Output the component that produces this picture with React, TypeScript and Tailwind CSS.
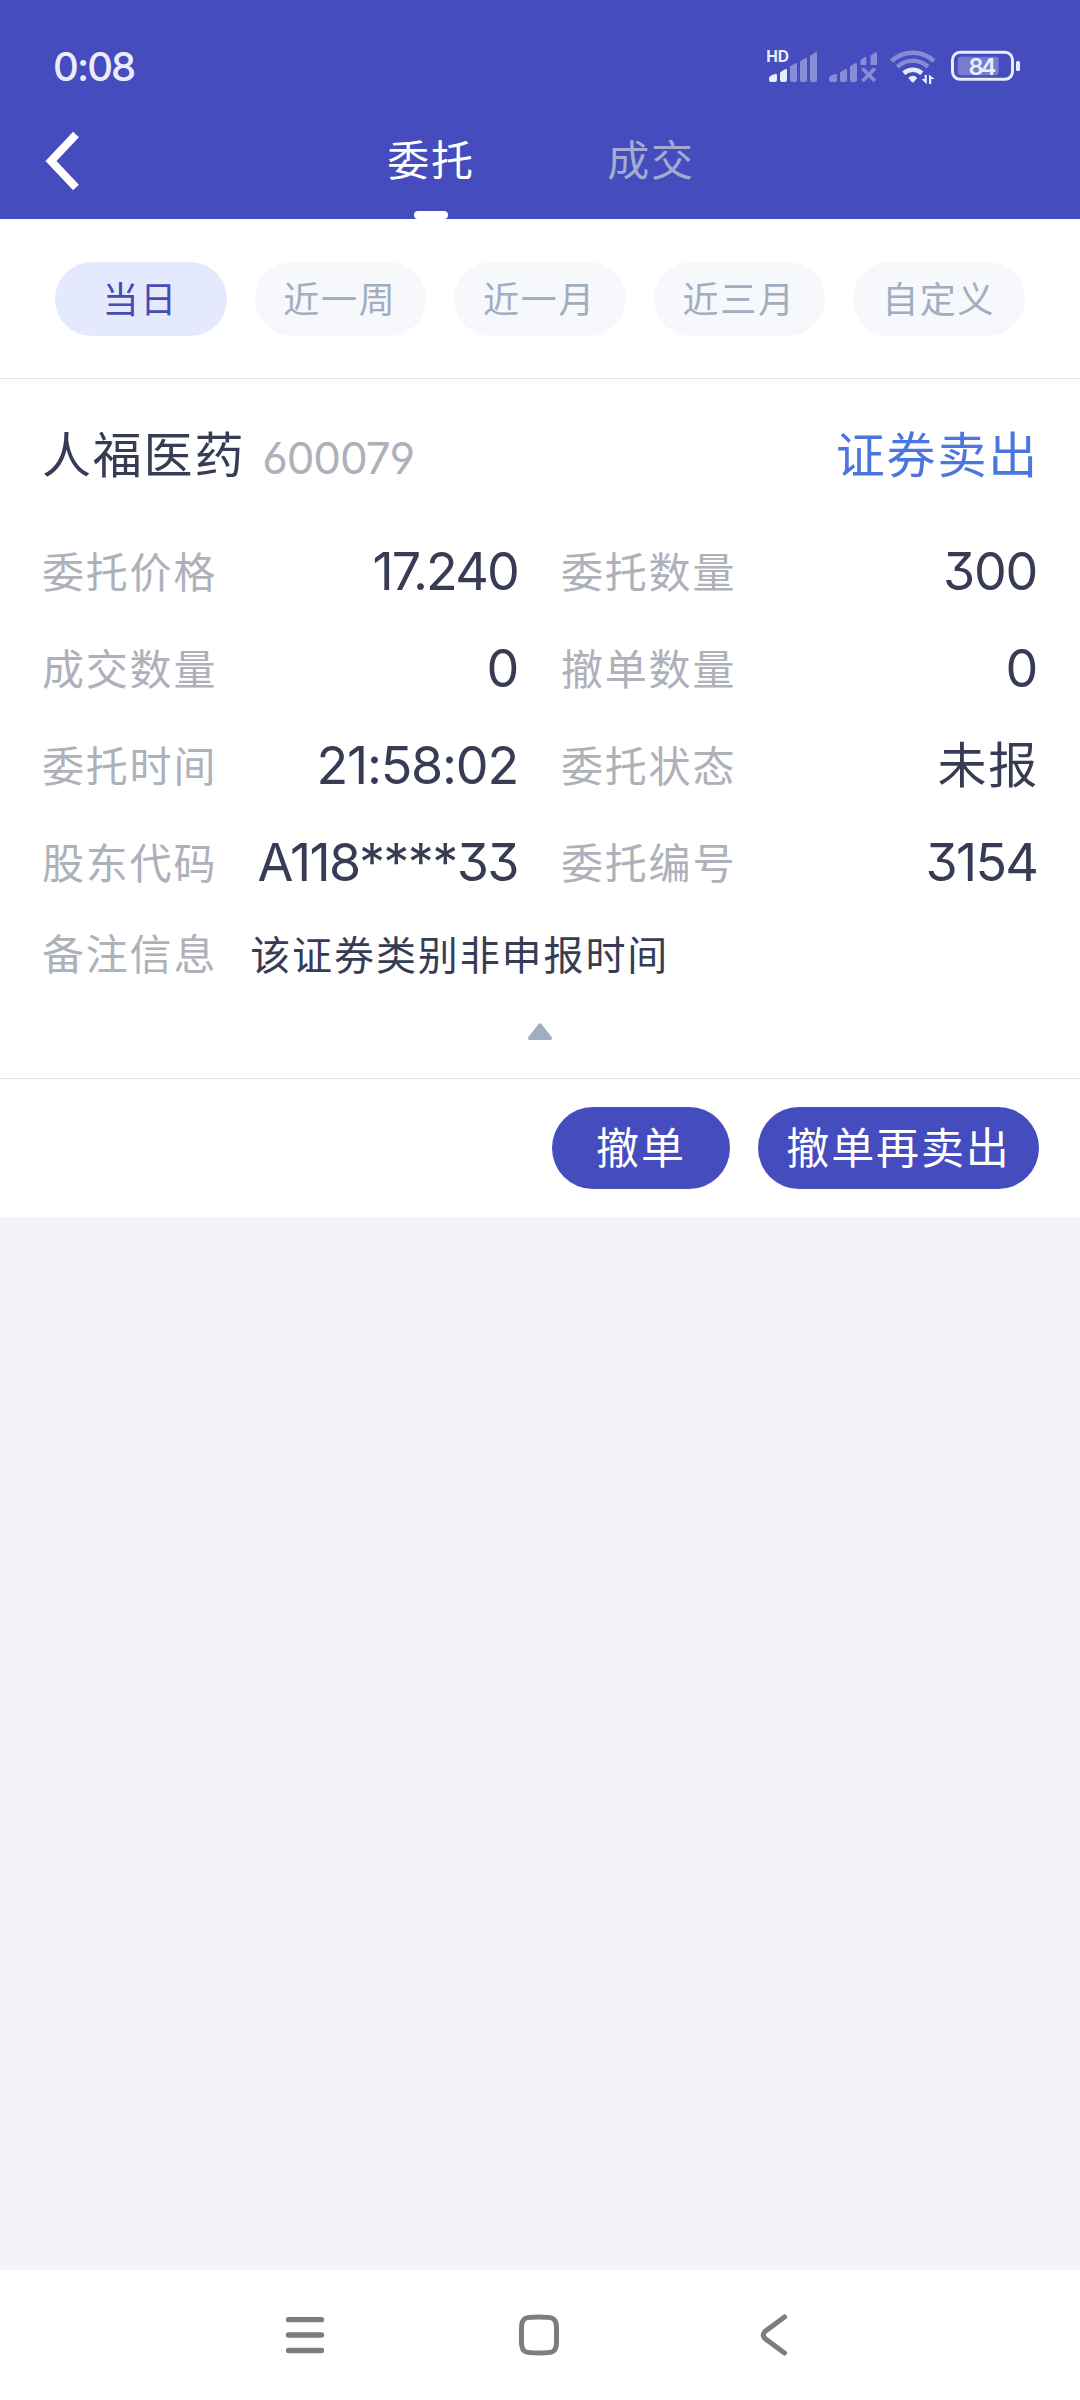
import clsx from 'clsx';
import { useState } from 'react';

const tabs = ['委托', '成交'];
const ranges = ['当日', '近一周', '近一月', '近三月', '自定义'];

const fields = [
  { label: '委托价格', value: '17.240', tracking: 'tracking-[-1.800px]' },
  { label: '委托数量', value: '300', tracking: 'tracking-[-1.300px]' },
  { label: '成交数量', value: '0', tracking: 'tracking-[-1.300px]' },
  { label: '撤单数量', value: '0', tracking: 'tracking-[-1.300px]' },
  { label: '委托时间', value: '21:58:02', tracking: 'tracking-[-1.200px]' },
  { label: '委托状态', value: '未报', cjk: true },
  { label: '股东代码', value: 'A118****33', tracking: 'tracking-[-1.600px]' },
  { label: '委托编号', value: '3154', tracking: 'tracking-[-1.800px]' },
];

const digits =
  "font-['Inter','Noto_Sans_CJK_SC',sans-serif] [font-feature-settings:'cv03','cv04','cv09']";

function StatusIcons() {
  return (
    <svg width="260" height="46" viewBox="0 0 260 46" fill="#ebecfb">
      {/* sim 1 */}
      <text x="6.2" y="22" fontSize="15.5" fontWeight="700" fontFamily="Inter, sans-serif">
        HD
      </text>
      <path d="M9 38.500Q9 36.500 11 35.500L15 34Q17 33.200 17 35.500V40Q17 42 15 42H11Q9 42 9 40Z" />
      <path d="M20 32.500L25 29.300Q27 28.200 27 30.500V40Q27 42 25 42H22Q20 42 20 40Z" />
      <g opacity="0.4">
        <path d="M30 26.500L35 23.300Q37 22.200 37 24.500V40Q37 42 35 42H32Q30 42 30 40Z" />
        <path d="M40 21.500L45 18.200Q47 17 47 19.500V40Q47 42 45 42H42Q40 42 40 40Z" />
        <path d="M50 15.800L55 12.500Q57 11.300 57 13.800V40Q57 42 55 42H52Q50 42 50 40Z" />
      </g>
      {/* sim 2 */}
      <g opacity="0.4">
        <path d="M69 38.500Q69 36.500 71 35.500L75 34Q77 33.200 77 35.500V40Q77 42 75 42H71Q69 42 69 40Z" />
        <path d="M80 32.500L85 29.300Q87 28.200 87 30.500V40Q87 42 85 42H82Q80 42 80 40Z" />
        <path d="M90 26.500L95 23.300Q97 22.200 97 24.500V40Q97 42 95 42H92Q90 42 90 40Z" />
        <path d="M100.500 20L104.500 17.300Q106.300 16.300 106.300 18V25H100.500Z" />
        <path d="M110.500 15.800L115 12.500Q117 11.300 117 13.800V25H110.500Z" />
        <path d="M102.500 28.500L115 41M115 28.500L102.500 41" stroke="#ebecfb" strokeWidth="3.800" />
      </g>
      {/* wifi */}
      <g fill="none" stroke="#ebecfb" strokeWidth="4.500">
        <path d="M131.500 21.200A31 31 0 0 1 174 21.200" opacity="0.4" />
        <path d="M137.500 26.800A22.500 22.500 0 0 1 168 26.800" opacity="0.4" />
        <path d="M143.800 33.200A13.500 13.500 0 0 1 161.800 33.200" />
      </g>
      <path d="M148.300 38Q152.800 33.500 157.300 38L153.800 42Q152.800 43 151.800 42Z" />
      <path d="M161.500 39H164.600V35H166.800V44.200ZM169 44V34.500L174.600 39H171.300V44Z" />
      {/* battery */}
      <rect x="192.500" y="12.300" width="60" height="27" rx="7.500" fill="none" stroke="#ebecfb" strokeWidth="3" />
      <rect x="197.700" y="16.800" width="41" height="18.500" rx="3" opacity="0.3" />
      <rect x="256" y="21" width="4" height="10" rx="1.500" />
      <text x="208.500" y="34.500" fontSize="23.500" fontWeight="600" fontFamily="Inter, sans-serif" textLength="28">
        84
      </text>
    </svg>
  );
}

function Header() {
  const [active, setActive] = useState(tabs[0]);

  return (
    <header className="h-[219px] bg-[#444cbe]">
      <div className="flex h-[103px] items-start justify-between pl-[53px] pr-[60px] pt-10">
        <span
          className={clsx('mt-1 text-[40px] leading-[46px] font-medium tracking-[-1.900px] text-[#ebecfb]', digits)}
        >
          0:08
        </span>
        <StatusIcons />
      </div>
      <div className="flex h-[116px] items-center">
        <button className="ml-[43px]" aria-label="返回">
          <svg width="38" height="60" viewBox="0 0 38 60" fill="none" stroke="#fff" strokeWidth="8">
            <path d="M33 3.500L8 30L33 56.500" />
          </svg>
        </button>
        <nav className="ml-[305px] flex h-full gap-[130px]">
          {tabs.map((tab) => (
            <button
              key={tab}
              onClick={() => setActive(tab)}
              className={clsx(
                'flex h-full w-[90px] flex-col items-center pt-[25px] text-[42px] leading-[60px] tracking-[1.800px]',
                tab === active ? 'text-white' : 'text-[#a3acd0]',
              )}
            >
              {tab}
              {tab === active && <span className="mt-auto h-2 w-[34px] rounded-[4px] bg-white" />}
            </button>
          ))}
        </nav>
      </div>
    </header>
  );
}

function RangeFilter() {
  const [active, setActive] = useState(ranges[0]);

  return (
    <div className="grid h-[160px] grid-cols-5 gap-7 border-b border-[#e3e3e5] bg-white px-[55px] pt-[43px]">
      {ranges.map((range) => (
        <button
          key={range}
          onClick={() => setActive(range)}
          className={clsx(
            'h-[74px] rounded-full pb-1 pr-px text-[36px] tracking-[1.700px]',
            range === active ? 'bg-[#e5e9fe] text-[#454cb4]' : 'bg-[#f6f8fc] text-[#a3adc0]',
          )}
        >
          {range}
        </button>
      ))}
    </div>
  );
}

function OrderCard() {
  return (
    <section className="bg-white text-[#373c54]">
      <div className="flex h-[144px] items-center justify-between px-[42px] pt-0.5">
        <div className="flex items-end">
          <h2 className="text-[49px] leading-[72px] tracking-[1.800px]">人福医药</h2>
          <span className={clsx('ml-[17px] text-[44px] leading-[60px] tracking-[-1.100px] text-[#aeb0ba]', digits)}>
            600079
          </span>
        </div>
        <span className="mr-[-1px] text-[49px] leading-[72px] tracking-[1.800px] text-[#4a76de]">证券卖出</span>
      </div>

      <dl className="grid grid-cols-2 gap-x-[42px] px-[42px]">
        {fields.map(({ label, value, tracking, cjk }) => (
          <div key={label} className="flex h-[97px] items-center justify-between">
            <dt className="pb-1 text-[42px] tracking-[1.800px] text-[#aeb0ba]">{label}</dt>
            <dd
              className={
                cjk
                  ? 'mr-[-1px] pb-[7px] text-[49px] tracking-[1.700px]'
                  : clsx('pr-px text-[52px]', digits, tracking)
              }
            >
              {value}
            </dd>
          </div>
        ))}
      </dl>

      <div className="flex h-[84px] items-center gap-[33px] px-[42px] pb-1">
        <span className="text-[42px] tracking-[1.800px] text-[#aeb0ba]">备注信息</span>
        <span className="mt-[3px] text-[40px] tracking-[1.900px]">该证券类别非申报时间</span>
      </div>

      <button className="flex h-[83px] w-full justify-center pt-7" aria-label="收起">
        <svg width="24" height="17" viewBox="0 0 24 17" fill="#a3adc0">
          <path d="M10.800 0.800Q12 -0.500 13.200 0.800L23.600 14Q24.500 17 22.500 17H1.500Q-0.500 17 0.400 14Z" />
        </svg>
      </button>

      <div className="flex h-[139px] items-center justify-end gap-7 border-t border-[#e3e3e5] pr-[41px] text-[43px] tracking-[1.900px] text-white">
        <button className="h-[82px] w-[178px] rounded-full bg-[#444cbe] pb-1.5">撤单</button>
        <button className="h-[82px] w-[281px] rounded-full bg-[#444cbe] pb-1.5">撤单再卖出</button>
      </div>
    </section>
  );
}

function SystemNav() {
  return (
    <footer className="flex h-[130px] justify-center gap-[194px] bg-white pt-[44px]">
      <svg width="40" height="42" viewBox="0 0 40 42" fill="none" stroke="#7d7d7d" strokeWidth="5.300" strokeLinecap="round">
        <path d="M3.500 5.700H36.500M3.500 21H36.500M3.500 36.500H36.500" />
      </svg>
      <svg width="42" height="42" viewBox="0 0 42 42" fill="none" stroke="#7d7d7d" strokeWidth="5">
        <path d="M20 3C33 3 37.500 3 37.500 14V28C37.500 39 33 39 20 39S2.500 39 2.500 28V14C2.500 3 7 3 20 3Z" />
      </svg>
      <svg width="40" height="42" viewBox="0 0 40 42" fill="none" stroke="#7d7d7d" strokeWidth="5" strokeLinecap="round">
        <path d="M29.500 3L10 17.500Q6.500 21 10 24.500L29.500 39" />
      </svg>
    </footer>
  );
}

export default function App() {
  return (
    <div className="flex h-[2400px] w-[1080px] flex-col bg-[#f3f4f7] font-['Noto_Sans_CJK_SC',sans-serif]">
      <Header />
      <main className="flex-1">
        <RangeFilter />
        <OrderCard />
      </main>
      <SystemNav />
    </div>
  );
}
